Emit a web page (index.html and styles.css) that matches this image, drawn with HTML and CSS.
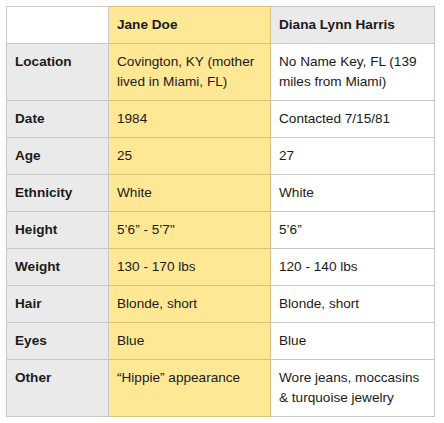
FILE: index.html
```html
<!DOCTYPE html>
<html>
<head>
<meta charset="utf-8">
<link rel="stylesheet" href="styles.css">
</head>
<body>
<table class="compare">
  <colgroup>
    <col class="c-label">
    <col class="c-jane">
    <col class="c-diana">
  </colgroup>
  <thead>
    <tr>
      <th class="blank"></th>
      <th class="jane">Jane Doe</th>
      <th class="diana-head">Diana Lynn Harris</th>
    </tr>
  </thead>
  <tbody>
    <tr><th class="label">Location</th><td class="jane">Covington, KY (mother lived in Miami, FL)</td><td class="diana">No Name Key, FL (139 miles from Miami)</td></tr>
    <tr><th class="label">Date</th><td class="jane">1984</td><td class="diana">Contacted 7/15/81</td></tr>
    <tr><th class="label">Age</th><td class="jane">25</td><td class="diana">27</td></tr>
    <tr><th class="label">Ethnicity</th><td class="jane">White</td><td class="diana">White</td></tr>
    <tr><th class="label">Height</th><td class="jane">5’6” - 5’7"</td><td class="diana">5’6”</td></tr>
    <tr><th class="label">Weight</th><td class="jane">130 - 170 lbs</td><td class="diana">120 - 140 lbs</td></tr>
    <tr><th class="label">Hair</th><td class="jane">Blonde, short</td><td class="diana">Blonde, short</td></tr>
    <tr><th class="label">Eyes</th><td class="jane">Blue</td><td class="diana">Blue</td></tr>
    <tr><th class="label">Other</th><td class="jane">“Hippie” appearance</td><td class="diana">Wore jeans, moccasins &amp; turquoise jewelry</td></tr>
  </tbody>
</table>
</body>
</html>
```

FILE: styles.css
```css
html, body {
  background: #ffffff;
}
body {
  margin: 6px;
  font-family: "Liberation Sans", Arial, Helvetica, sans-serif;
  font-size: 13.6px;
  color: #1a1a1a;
}
.compare {
  border-collapse: collapse;
  table-layout: fixed;
  width: 428px;
}
.c-label { width: 102px; }
.c-jane { width: 162px; }
.c-diana { width: 164px; }

.compare th,
.compare td {
  border: 1px solid #c8c8c8;
  padding: 8px 3px 8px 8px;
  line-height: 20px;
  text-align: left;
  vertical-align: top;
}
.compare th {
  font-weight: bold;
}
.blank {
  background: #ffffff;
  border-right-color: #cbbd8e;
}
.label {
  background: #eaeaea;
  border-right-color: #cbbd8e;
}
.compare .jane {
  background: #fee896;
  border-color: #d9c27a;
}
.compare .diana-head {
  background: #eaeaea;
}
.compare .diana {
  background: #ffffff;
  font-weight: normal;
}
.compare td.jane {
  font-weight: normal;
}
```
